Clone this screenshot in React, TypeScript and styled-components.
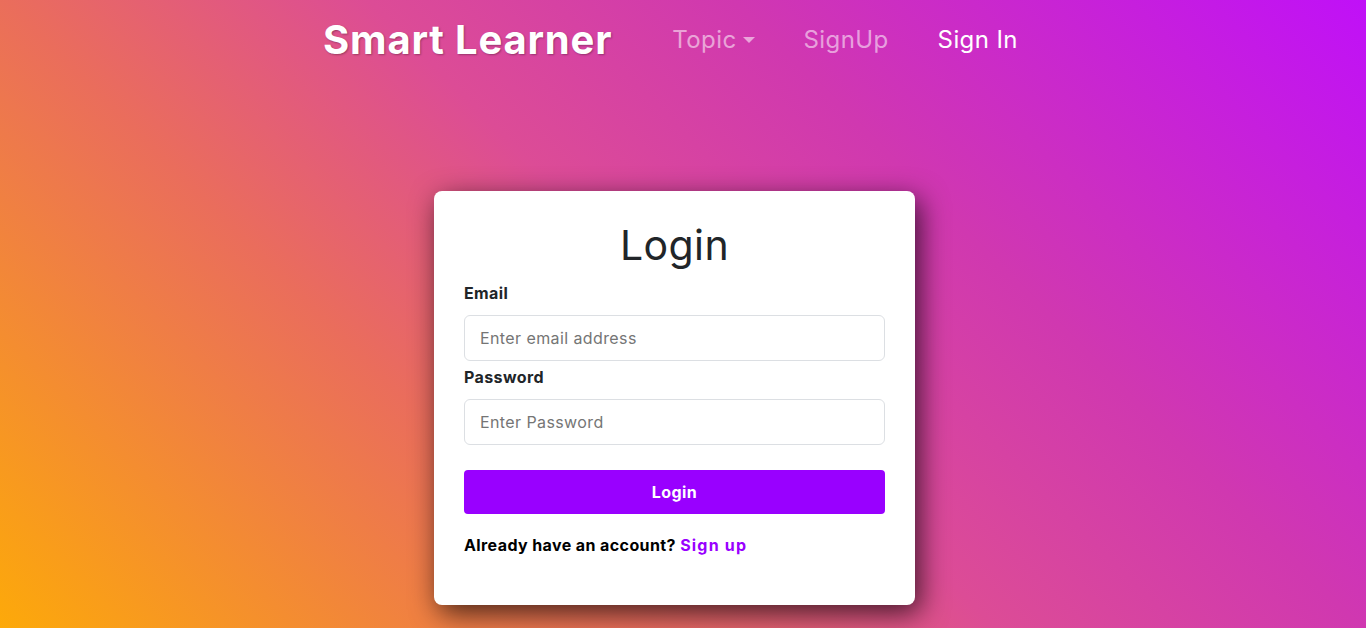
import React from 'react';
import styled, { createGlobalStyle } from 'styled-components';

const GlobalStyle = createGlobalStyle`
  * {
    box-sizing: border-box;
  }
  body {
    margin: 0;
    font-family: Inter, 'Noto Sans', sans-serif;
    letter-spacing: 0.4px;
  }
`;

// right padding stands in for the 17px scrollbar of the original window
const Page = styled.div`
  min-height: 880px;
  padding-right: 17px;
  background: linear-gradient(
    45deg,
    #ffb000 0%,
    #ffb000 8%,
    #ea6d5c 39.5%,
    #dc4c96 55.6%,
    #d038b0 71.8%,
    #c010f8 100%
  );
`;

const Navbar = styled.nav`
  display: flex;
  align-items: center;
  justify-content: center;
  height: 78px;
`;

const Brand = styled.a`
  font-size: 40px;
  font-weight: 700;
  color: #fff;
  text-decoration: none;
  letter-spacing: 0.8px;
  text-shadow: 1px 1px 2px rgba(0, 0, 0, 0.3);
  margin-right: 52px;
`;

const NavLinks = styled.ul`
  display: flex;
  align-items: center;
  gap: 33px;
  list-style: none;
  margin: 0;
  padding: 0;
`;

const NavLink = styled.a<{ $active?: boolean; $caret?: boolean }>`
  display: flex;
  align-items: center;
  font-size: 24px;
  padding: 0 8px;
  color: ${(p) => (p.$active ? '#fff' : 'rgba(255, 255, 255, 0.55)')};
  text-decoration: none;

  &::after {
    content: '';
    display: ${(p) => (p.$caret ? 'inline-block' : 'none')};
    margin-left: 6px;
    margin-top: 2px;
    border-top: 6px solid rgba(255, 255, 255, 0.55);
    border-left: 6px solid transparent;
    border-right: 6px solid transparent;
  }
`;

const Main = styled.main`
  display: flex;
  justify-content: center;
  padding-top: 113px;
`;

const Card = styled.form`
  width: 481px;
  background: #fff;
  border-radius: 8px;
  padding: 30px 30px 48px;
  box-shadow: 5px 8px 28px rgba(0, 0, 0, 0.7);
`;

const Title = styled.h1`
  margin: 0 0 12px;
  text-align: center;
  font-size: 41px;
  font-weight: 400;
  line-height: 48px;
  color: #212529;
`;

const Group = styled.div<{ $gap: number }>`
  display: flex;
  flex-direction: column;
  gap: 10px;
  margin-bottom: ${(p) => p.$gap}px;
`;

const Label = styled.label`
  font-size: 16px;
  font-weight: 700;
  line-height: 24px;
  color: #212529;
`;

const Input = styled.input`
  height: 46px;
  width: 100%;
  padding: 0 15px;
  font-family: inherit;
  font-size: 16px;
  letter-spacing: 0.4px;
  color: #212529;
  border: 1px solid #dcdfe3;
  border-radius: 6px;
  outline: none;

  &::placeholder {
    color: #757575;
  }
`;

const Button = styled.button`
  width: 100%;
  height: 44px;
  border: none;
  border-radius: 4px;
  background: #9900ff;
  color: #fff;
  font-family: inherit;
  font-size: 16px;
  font-weight: 700;
  letter-spacing: 0.4px;
  cursor: pointer;
`;

const Footer = styled.p`
  margin: 19px 0 0;
  font-size: 16px;
  font-weight: 700;
  line-height: 24px;
  color: #000;
`;

const SignUpLink = styled.a`
  color: #9900ff;
  text-decoration: none;
  letter-spacing: 1.2px;
`;

const App = () => (
  <Page>
    <GlobalStyle />
    <Navbar>
      <Brand href="#">Smart Learner</Brand>
      <NavLinks>
        <li>
          <NavLink href="#" $caret>
            Topic
          </NavLink>
        </li>
        <li>
          <NavLink href="#">SignUp</NavLink>
        </li>
        <li>
          <NavLink href="#" $active>
            Sign In
          </NavLink>
        </li>
      </NavLinks>
    </Navbar>
    <Main>
      <Card onSubmit={(e) => e.preventDefault()}>
        <Title>Login</Title>
        <Group $gap={4}>
          <Label htmlFor="email">Email</Label>
          <Input id="email" type="email" placeholder="Enter email address" />
        </Group>
        <Group $gap={25}>
          <Label htmlFor="password">Password</Label>
          <Input id="password" type="password" placeholder="Enter Password" />
        </Group>
        <Button type="submit">Login</Button>
        <Footer>
          Already have an account? <SignUpLink href="#">Sign up</SignUpLink>
        </Footer>
      </Card>
    </Main>
  </Page>
);

export default App;
